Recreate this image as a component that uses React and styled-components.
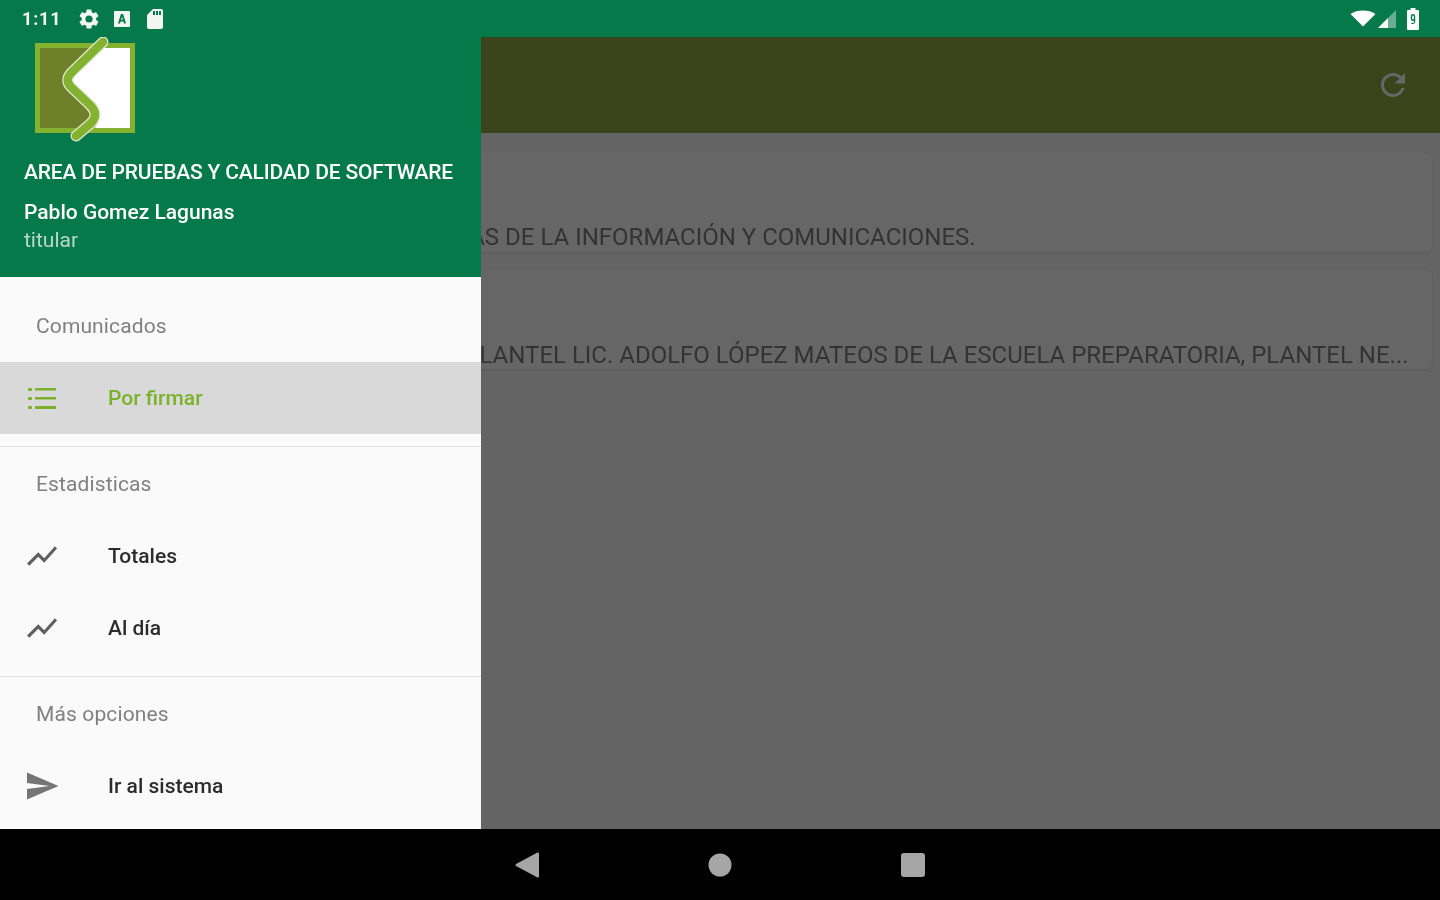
import React from "react";
import styled, { createGlobalStyle } from "styled-components";

const Global = createGlobalStyle`
  html, body { margin: 0; padding: 0; height: 100%; background: #000; }
  #root { height: 100%; }
  * { box-sizing: border-box; }
`;

const Screen = styled.div`
  width: 1440px;
  height: 900px;
  display: flex;
  flex-direction: column;
  overflow: hidden;
  font-family: Roboto, "Liberation Sans", sans-serif;
  filter: blur(0.5px);
`;

const StatusBar = styled.div`
  height: 37px;
  flex: none;
  background: #06794a;
  display: flex;
  align-items: center;
  justify-content: space-between;
  padding: 0 20px 0 22px;
  color: #f2f6f3;
`;

const StatusGroup = styled.div`
  display: flex;
  align-items: center;
  gap: ${(p) => p.$gap || 0}px;
`;

const Clock = styled.span`
  font-size: 18px;
  font-weight: 700;
  letter-spacing: 0.8px;
  margin-right: 7px;
`;

const Body = styled.div`
  flex: 1;
  min-height: 0;
  position: relative;
  overflow: hidden;
  background: #fafafa;
`;

const AppBar = styled.div`
  height: 96px;
  background: #91aa41;
  display: flex;
  align-items: center;
  justify-content: flex-end;
  padding: 0 29px 0 0;
`;

const CardList = styled.div`
  display: flex;
  flex-direction: column;
  gap: 18px;
  padding: 20px 8px 0;
`;

const Card = styled.div`
  height: 99px;
  background: #fff;
  border-radius: 6px;
  box-shadow: 0 1px 3px rgba(0, 0, 0, 0.12);
  padding: 0 24px 0 ${(p) => p.$inset}px;
  display: flex;
  align-items: flex-end;
`;

const CardText = styled.div`
  font-size: 24px;
  line-height: 28px;
  color: #808080;
  white-space: nowrap;
  overflow: hidden;
  margin-bottom: ${(p) => p.$lift}px;
`;

const Scrim = styled.div`
  position: absolute;
  inset: 0;
  background: rgba(0, 0, 0, 0.6);
`;

const Drawer = styled.aside`
  position: absolute;
  left: 0;
  top: 0;
  bottom: 0;
  width: 481px;
  background: #fafafa;
  overflow: hidden;
`;

const DrawerHeader = styled.header`
  height: 240px;
  background: #06794a;
  padding: 0 24px;
  color: #fff;
  display: flex;
  flex-direction: column;
`;

const Logo = styled.svg`
  display: block;
  margin-left: 8px;
  flex: none;
`;

const AreaName = styled.div`
  font-size: 21px;
  font-weight: 500;
  line-height: 28px;
  letter-spacing: -0.17px;
  margin-top: 13px;
  white-space: nowrap;
`;

const UserName = styled.div`
  font-size: 21px;
  font-weight: 500;
  line-height: 28px;
  margin-top: 12px;
`;

const UserRole = styled.div`
  font-size: 21px;
  line-height: 28px;
  color: rgba(255, 255, 255, 0.7);
`;

const Group = styled.section`
  padding: ${(p) => (p.$first ? 13 : 1)}px 0 12px;
  border-top: ${(p) => (p.$first ? "none" : "1.5px solid #e2e2e2")};
`;

const GroupTitle = styled.div`
  height: 72px;
  display: flex;
  align-items: center;
  padding-left: 36px;
  font-size: 21px;
  letter-spacing: 0.12px;
  color: #808080;
`;

const Item = styled.div`
  height: 72px;
  display: flex;
  align-items: center;
  gap: 48px;
  padding-left: 24px;
  font-size: 21px;
  font-weight: 500;
  color: ${(p) => (p.$active ? "#7cb12b" : "#2c2c2c")};
  background: ${(p) => (p.$active ? "#d9d9d9" : "transparent")};
`;

const NavBar = styled.nav`
  height: 71px;
  flex: none;
  background: #000;
  display: grid;
  grid-template-columns: repeat(3, 192.5px);
  justify-content: center;
  align-items: center;
  justify-items: center;
`;

const BatterySlot = styled.span`
  display: flex;
  margin-left: 8px;
`;

const Icon = ({ d, size = 36, fill = "currentColor", ...rest }) => (
  <svg width={size} height={size} viewBox="0 0 24 24" fill={fill} {...rest}>
    <path d={d} />
  </svg>
);

const P = {
  gear: "M19.14 12.94c.04-.3.06-.61.06-.94s-.02-.64-.07-.94l2.03-1.58a.49.49 0 0 0 .12-.61l-1.92-3.32a.49.49 0 0 0-.59-.22l-2.39.96a7 7 0 0 0-1.62-.94l-.36-2.54a.48.48 0 0 0-.48-.41h-3.84a.47.47 0 0 0-.47.41l-.36 2.54c-.59.24-1.13.57-1.62.94l-2.39-.96a.49.49 0 0 0-.59.22L2.73 8.87a.48.48 0 0 0 .12.61l2.03 1.58c-.05.3-.08.63-.08.94s.02.64.07.94l-2.03 1.58a.49.49 0 0 0-.12.61l1.92 3.32c.12.22.37.29.59.22l2.39-.96c.5.38 1.03.7 1.62.94l.36 2.54c.05.24.24.41.48.41h3.84c.24 0 .44-.17.47-.41l.36-2.54c.59-.24 1.13-.56 1.62-.94l2.39.96c.22.08.47 0 .59-.22l1.92-3.32a.47.47 0 0 0-.12-.61l-2.01-1.58zM12 15.6A3.6 3.6 0 1 1 12 8.4a3.6 3.6 0 0 1 0 7.2z",
  sd: "M18 2h-8L4.02 8 4 20c0 1.1.9 2 2 2h12c1.1 0 2-.9 2-2V4c0-1.1-.9-2-2-2zm-6 6h-2V4h2v4zm3 0h-2V4h2v4zm3 0h-2V4h2v4z",
  refresh: "M17.65 6.35C16.2 4.9 14.21 4 12 4c-4.42 0-7.99 3.58-7.99 8s3.57 8 7.99 8c3.73 0 6.84-2.55 7.73-6h-2.08c-.82 2.33-3.04 4-5.65 4-3.31 0-6-2.69-6-6s2.69-6 6-6c1.66 0 3.14.69 4.22 1.78L13 11h7V4l-2.35 2.35z",
  chart: "M3.5 18.49l6-6.01 4 4L22 6.92l-1.41-1.41-7.09 7.97-4-4L2 16.99z",
  send: "M2.01 21L23 12 2.01 3 2 10l15 2-15 2z",
};

const AutoIcon = () => (
  <svg width="24" height="24" viewBox="0 0 24 24">
    <path fill="currentColor" fillRule="evenodd" d="M5 4h14a1 1 0 0 1 1 1v14a1 1 0 0 1-1 1H5a1 1 0 0 1-1-1V5a1 1 0 0 1 1-1zm5.900 3L8 16.500h2l.6-2h2.800l.6 2h2L13.100 7h-2.200zm1.100 2.600l.9 3.200h-1.800l.9-3.200z" />
  </svg>
);

const ListIcon = () => (
  <svg width="36" height="36" viewBox="0 0 36 36" fill="#7cb12b">
    <rect x="4" y="8" width="4" height="3" rx="1" />
    <rect x="11" y="8" width="21" height="2.500" />
    <rect x="4" y="17" width="4" height="3" rx="1" />
    <rect x="11" y="17" width="21" height="2.500" />
    <rect x="4" y="26" width="4" height="3" rx="1" />
    <rect x="11" y="26" width="21" height="3" />
  </svg>
);

const WifiIcon = () => (
  <svg width="26" height="17" viewBox="0 0 26 17" fill="#fff">
    <path d="M0.5 4C4 1.500 8.200 0.500 13 0.500s9 1 12.500 3.500L13 16.500z" />
  </svg>
);

const SignalIcon = () => (
  <svg width="18" height="18" viewBox="0 0 18 18">
    <path d="M0 18L18 0v18z" fill="#fff" opacity="0.4" />
    <path d="M0 18L10 8v10z" fill="#fff" opacity="0.9" />
  </svg>
);

const BatteryIcon = () => (
  <svg width="14" height="22" viewBox="0 0 14 22">
    <path fill="#fff" fillRule="evenodd" d="M4.500 0h5v2H12a1 1 0 0 1 1 1v18a1 1 0 0 1-1 1H2a1 1 0 0 1-1-1V3a1 1 0 0 1 1-1h2.500zM7 6a2.200 2.200 0 0 0-2.200 2.200v2.600A2.200 2.200 0 0 0 7 13c.7 0 1-.3 1-.3v2H5.300V16H7c1.300 0 2.200-1 2.200-2.200V8.200A2.200 2.200 0 0 0 7 6zm0 1.400c.5 0 .8.4.8.8v2.600c0 .4-.3.8-.8.8s-.8-.4-.8-.8V8.200c0-.4.3-.8.8-.8z" />
  </svg>
);

const S_CURVE = "M103 42L72 72Q64 80 71 87L90 105Q100 115 90 124L76 136";

const LogoMark = () => (
  <Logo width="112" height="108" viewBox="32 37 112 108">
    <rect x="37" y="46" width="96" height="85" fill="#6f7f2a" />
    <path d="M104 46H133V131H92C100 122 103 114 92 103L70 80z" fill="#fff" />
    <rect x="37.500" y="45.500" width="95" height="85" fill="none" stroke="#84b12f" strokeWidth="5" />
    <path d={S_CURVE} fill="none" stroke="#dfe9cf" strokeWidth="11" strokeLinecap="round" strokeLinejoin="round" />
    <path d={S_CURVE} fill="none" stroke="#84b12f" strokeWidth="8.500" strokeLinecap="round" strokeLinejoin="round" />
  </Logo>
);

export default function App() {
  return (
    <Screen>
      <Global />
      <StatusBar>
        <StatusGroup $gap={9}>
          <Clock>1:11</Clock>
          <Icon d={P.gear} size={24} />
          <AutoIcon />
          <Icon d={P.sd} size={24} />
        </StatusGroup>
        <StatusGroup $gap={2}>
          <WifiIcon />
          <SignalIcon />
          <BatterySlot>
            <BatteryIcon />
          </BatterySlot>
        </StatusGroup>
      </StatusBar>

      <Body>
        <AppBar>
          <Icon d={P.refresh} fill="#fff" />
        </AppBar>
        <CardList>
          <Card $inset={153}>
            <CardText $lift={1}>SECRETARÍA DE TECNOLOGÍAS DE LA INFORMACIÓN Y COMUNICACIONES.</CardText>
          </Card>
          <Card $inset={280}>
            <CardText $lift={0}>DIRECCIÓN DEL PLANTEL LIC. ADOLFO LÓPEZ MATEOS DE LA ESCUELA PREPARATORIA, PLANTEL NE...</CardText>
          </Card>
        </CardList>
        <Scrim />
        <Drawer>
          <DrawerHeader>
            <LogoMark />
            <AreaName>AREA DE PRUEBAS Y CALIDAD DE SOFTWARE</AreaName>
            <UserName>Pablo Gomez Lagunas</UserName>
            <UserRole>titular</UserRole>
          </DrawerHeader>
          <Group $first>
            <GroupTitle>Comunicados</GroupTitle>
            <Item $active>
              <ListIcon />
              Por firmar
            </Item>
          </Group>
          <Group>
            <GroupTitle>Estadisticas</GroupTitle>
            <Item>
              <Icon d={P.chart} fill="#5f5f5f" />
              Totales
            </Item>
            <Item>
              <Icon d={P.chart} fill="#5f5f5f" />
              Al día
            </Item>
          </Group>
          <Group>
            <GroupTitle>Más opciones</GroupTitle>
            <Item>
              <Icon d={P.send} fill="#757575" />
              Ir al sistema
            </Item>
          </Group>
        </Drawer>
      </Body>

      <NavBar>
        <svg width="26" height="28" viewBox="0 0 26 28" fill="#a6a6a6">
          <path d="M23 2.500V25.500L1.500 14z" stroke="#a6a6a6" strokeWidth="2" strokeLinejoin="round" />
        </svg>
        <svg width="24" height="24" viewBox="0 0 24 24" fill="#a6a6a6">
          <circle cx="12" cy="12" r="11.500" />
        </svg>
        <svg width="24" height="24" viewBox="0 0 24 24" fill="#a6a6a6">
          <rect width="24" height="24" rx="3" />
        </svg>
      </NavBar>
    </Screen>
  );
}
